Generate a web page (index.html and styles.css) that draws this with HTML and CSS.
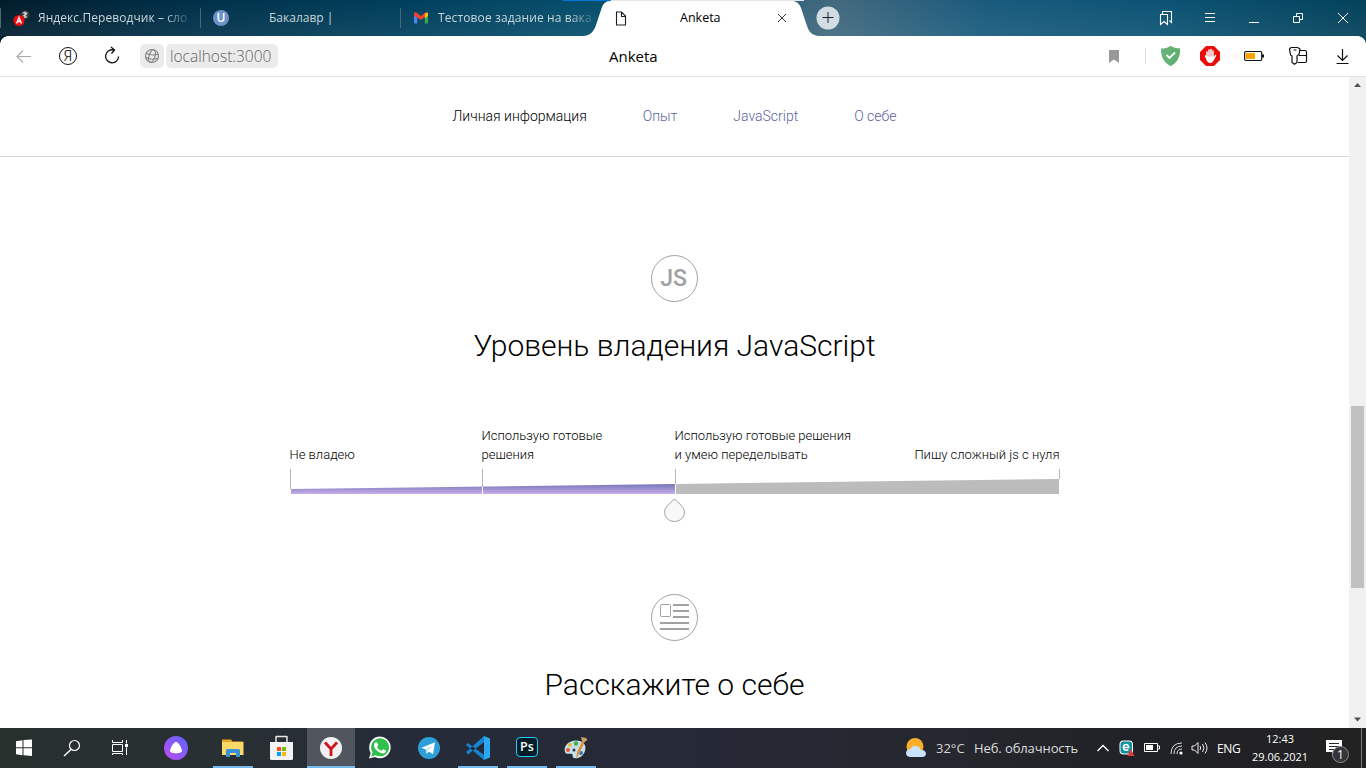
FILE: index.html
```html
<!DOCTYPE html>
<html lang="ru">
<head>
<meta charset="utf-8">
<title>Anketa</title>
<link rel="stylesheet" href="styles.css">
</head>
<body>
<header class="tabs">
  <div class="tab">
    <svg class="fav" width="18" height="18" viewBox="0 0 18 18"><circle cx="12" cy="6" r="4.500" fill="#3c3c3c"/><path d="M9.500 4h5M12 2.500v6M10 7l4-2M14 8h-3" stroke="#eee" fill="none"/><circle cx="6" cy="11.500" r="5.500" fill="#f00c0c"/><path d="M3.500 14.500 6 8.500 8.500 14.500M4.500 12.500h3" stroke="#fff" stroke-width="1.300" fill="none"/></svg>
    <span class="tab-text t1">Яндекс.Переводчик – сло</span>
  </div>
  <div class="tab">
    <span class="u-badge">U</span>
    <span class="tab-text t2">Бакалавр |</span>
  </div>
  <div class="tab tab-mail">
    <svg class="fav" width="14" height="12" viewBox="0 0 14 12"><path d="M0 2v8.500c0 .6.400 1 1 1h2.200V5z" fill="#4285f4"/><path d="M14 2v8.500c0 .6-.4 1-1 1h-2.200V5z" fill="#34a853"/><path d="M0 4V1.500C0 0 1.500-.2 2.500.6L7 4 11.500.6C12.500-.2 14 0 14 1.500L10.800 5 7 8 3.200 5.800z" fill="#ea4335"/><path d="M10.800 1.200 14 .8v3.200l-3.200 2.400z" fill="#fbbc04"/></svg>
    <span class="tab-text t3">Тестовое задание на вака</span>
  </div>
  <div class="tab-active">
    <svg class="shape" width="234" height="36" viewBox="0 0 234 36"><path d="M0 36C7 35 10 31 12 25L18 7C20 2 23 1 27 1H208C212 1 215 3 217 8L223 26C225 32 228 35 234 36z" fill="#fff"/></svg>
    <svg class="page-ico" width="12" height="15" viewBox="0 0 12 15"><path d="M1.500 1h5L10.500 5V14h-9zM6.500 1v4.500h4" fill="none" stroke="#16202b" stroke-width="1.100"/></svg>
    <span class="active-name">Anketa</span>
    <svg class="close" width="10" height="10" viewBox="0 0 10 10"><path d="M1 1l8 8M9 1 1 9" stroke="#333e49" stroke-width="1"/></svg>
  </div>
  <svg class="plus" width="24" height="24" viewBox="0 0 24 24"><circle cx="12" cy="12" r="11.500" fill="#d3dce2"/><path d="M6.500 11.500h11M12 6v11" stroke="#17242e"/></svg>
  <div class="win">
    <svg width="44" height="36" viewBox="0 0 44 36"><path d="M16.500 14.500h7v10l-3.500-3-3.500 3zM18.500 14v-2.500h9v11l-2-2" fill="none" stroke="#fff" stroke-width="1.100"/></svg>
    <svg width="44" height="36" viewBox="0 0 44 36"><path d="M17 13.500h10M17 17.500h10M17 21.500h10" stroke="#fff"/></svg>
    <svg width="44" height="36" viewBox="0 0 44 36"><path d="M17 22.500h10" stroke="#fff"/></svg>
    <svg width="44" height="36" viewBox="0 0 44 36"><path d="M17.500 16.500h6v6h-6zM20.500 16v-2.500h6v6H24" fill="none" stroke="#fff"/></svg>
    <svg width="46" height="36" viewBox="0 0 46 36"><path d="m18 13 10 10M28 13 18 23" stroke="#fff"/></svg>
  </div>
  <i class="strip"><i></i></i>
</header>

<div class="toolbar">
  <svg width="44" height="40" viewBox="0 0 44 40"><path d="M29 20.500H15.500M21 14.500l-6 6 6 6" fill="none" stroke="#a9a9a9" stroke-width="1.100"/></svg>
  <div class="ya"><span>Я</span></div>
  <svg width="44" height="40" viewBox="0 0 44 40"><path d="M28.600 20.500a6.500 6.500 0 1 1-4.800-6.500M21 11l3.500 3-3 3.500" fill="none" stroke="#111" stroke-width="1.300"/></svg>
  <span class="globe"><svg width="24" height="24" viewBox="0 0 24 24"><g fill="none" stroke="#858585" stroke-width="1.200"><circle cx="12" cy="12" r="6.500"/><ellipse cx="12" cy="12" rx="3" ry="6.500" transform="rotate(15 12 12)"/><path d="M6 9.300q6 3 12.300.7M5.800 13.500q6 3 11.800.8"/></g></svg></span>
  <span class="url">localhost:3000</span>
  <span class="doc">Anketa</span>
  <div class="tools">
    <svg width="44" height="40" viewBox="0 0 44 40"><path d="M17 14h10v13l-5-3.500-5 3.500z" fill="#999"/></svg>
    <i class="sep"></i>
    <svg width="36" height="40" viewBox="0 0 36 40"><path d="M18.500 10c3 2 6 2.500 9.500 2.500 0 8-2 13.500-9.500 17.500C11 26 9 20.500 9 12.500c3.500 0 6.500-.5 9.500-2.500z" fill="#67b279"/><path d="M18.500 10c3 2 6 2.500 9.500 2.500 0 8-2 13.500-9.500 17.500z" fill="#5fb070"/><path d="m14.500 19 3 3 5.500-5.500" fill="none" stroke="#fff" stroke-width="1.800"/></svg>
    <svg width="44" height="40" viewBox="0 0 44 40"><path d="M18 10h8l6 6v8l-6 6h-8l-6-6v-8z" fill="#e90c0c"/><path d="M19 16v6M21 14v8M23 13.500v8M25 15v8M27.500 19.500l-2 4M17.500 20l1.500 3" stroke="#fff" stroke-width="1.500" stroke-linecap="round"/><path d="M18 20.500h8.300q0 6.500-4.200 6.500T18 20.500z" fill="#fff"/></svg>
    <svg width="44" height="40" viewBox="0 0 44 40"><rect x="12.700" y="15.500" width="17" height="9" rx="1.200" fill="#fff" stroke="#111" stroke-width="1.200"/><path d="M14 17h9v6h-9z" fill="#ffa300"/><path d="M30 18.500h2v3h-2z" fill="#111"/></svg>
    <svg width="44" height="40" viewBox="0 0 44 40"><g fill="#fff" stroke="#111" stroke-width="1.200"><path d="M21 14.500h8q1.500 0 1.500 1.500v9q0 1.500-1.500 1.500h-7M23 19.500h7.500"/><path d="M15 11.500h6.500l2.500 1.500-1 5.500-2 1.500v6.500l-2.500 1.700-2.500-1.700V20l-1.500-1-1-6zM17.500 14h3"/></g></svg>
    <svg width="44" height="40" viewBox="0 0 44 40"><path d="M22.500 13v11.500m-5-5 5 5 5-5M16.500 27.500h12" fill="none" stroke="#111" stroke-width="1.200"/></svg>
  </div>
</div>

<div class="view">
  <main class="page">
    <nav class="menu"><a class="on">Личная информация</a><a>Опыт</a><a>JavaScript</a><a>О себе</a></nav>
    <section class="level">
      <div class="round">JS</div>
      <h2>Уровень владения JavaScript</h2>
      <div class="scale">
        <div class="labels"><span>Не владею</span><span>Использую готовые<br>решения</span><span>Использую готовые решения<br>и умею переделывать</span><span class="end">Пишу сложный js с нуля</span></div>
        <svg class="bar" width="770" height="54" viewBox="0 0 770 54">
          <defs><linearGradient id="fill" x1="0" y1="15" x2="0" y2="25" gradientUnits="userSpaceOnUse"><stop offset="0" stop-color="#7574b8"/><stop offset="1" stop-color="#c7afea"/></linearGradient></defs>
          <path d="M385 15 769 10V25H385z" fill="#bcbcbc"/>
          <path d="M1 20 385 15V25H1z" fill="url(#fill)"/>
          <path d="M192.500 18v7M385.500 15v10" stroke="#fff"/>
          <path d="M.5 0v20M192.500 0v18M385.500 0v15M769.500 0v10" stroke="#b7b7b7"/>
          <path d="M384.500 30.500c1 0 1.400.6 2 1.300l5.500 5.400c5.300 5.500 1.500 15.300-7.500 15.300s-12.800-9.800-7.500-15.300l5.500-5.400c.6-.7 1-1.300 2-1.300z" fill="#f9f9f9" stroke="#a1a1a1"/>
        </svg>
      </div>
    </section>
    <section class="about">
      <svg class="card-ico" width="47" height="47" viewBox="0 0 47 47"><circle cx="23.500" cy="23.500" r="23" fill="none" stroke="#a1a1a1"/><rect x="9.500" y="10.500" width="10" height="12" rx="1" fill="none" stroke="#a1a1a1"/><path d="M22 11h16M22 17h16M22 23h16M9 29h29M9 35h29" stroke="#a1a1a1" stroke-width="2"/></svg>
      <h2>Расскажите о себе</h2>
    </section>
  </main>
  <div class="scroll">
    <svg width="17" height="17" viewBox="0 0 17 17"><path d="M5 10 8.500 6 12 10z" fill="#505050"/></svg>
    <i class="thumb"></i>
    <svg class="down" width="17" height="17" viewBox="0 0 17 17"><path d="M5 6.500 8.500 10.500 12 6.500z" fill="#505050"/></svg>
  </div>
</div>

<footer class="taskbar">
  <div class="sys">
    <svg width="48" height="40" viewBox="0 0 48 40"><path d="m16 13.200 6.500-.9v7H16zM23.500 12.100 32 11.500v7.800h-8.500zM16 20.300h6.500v6.900l-6.500-.9zM23.500 20.300H32V28l-8.500-.7z" fill="#fff"/></svg>
    <svg width="48" height="40" viewBox="0 0 48 40"><circle cx="26.500" cy="17.500" r="5" fill="none" stroke="#fff" stroke-width="1.200"/><path d="m23 21.500-7 6.500" stroke="#fff" stroke-width="1.400"/></svg>
    <svg width="48" height="40" viewBox="0 0 48 40"><path d="M16.500 12v2.500h10V12M16.500 16.500h10v7h-10zM16.500 27v-1.500h10V27M30.500 12v3.500M30.500 19.500V27" fill="none" stroke="#fff"/><path d="M29 16h3v3h-3z" fill="#fff"/></svg>
    <svg class="alice" width="48" height="40" viewBox="0 0 48 40"><defs><linearGradient id="al" x1="1" y1="0" x2="0" y2="1"><stop stop-color="#5965ff"/><stop offset="1" stop-color="#c14df4"/></linearGradient></defs><circle cx="24" cy="20" r="12" fill="url(#al)"/><path d="M24 14c2.500 0 6 6.500 6 9 0 3-12 3-12 0 0-2.500 3.500-9 6-9z" fill="#fff"/></svg>
  </div>
  <div class="apps">
    <svg class="open" width="48" height="40" viewBox="0 0 48 40"><path d="M13 11.500h9l1.500 2H34V27H13z" fill="#e9a720"/><path d="M13 14h21.500v13H13z" fill="#ffd968"/><path d="M17 29v-6.500q0-1.500 1.500-1.500h11q1.500 0 1.500 1.500V29h-4v-4h-6v4z" fill="#3a92d8"/></svg>
    <svg width="48" height="40" viewBox="0 0 48 40"><path d="M18 16V9q0-.5.500-.5h10q.5 0 .5.500v7" fill="none" stroke="#e8e8e8" stroke-width="1.500"/><path d="M12 14h23v16.500q0 1.500-1.500 1.500h-20q-1.500 0-1.500-1.500z" fill="#f3f3f3"/><path d="M19 19h4v4h-4z" fill="#f25022"/><path d="M24 19h4v4h-4z" fill="#7fba00"/><path d="M19 24h4v4h-4z" fill="#00a4ef"/><path d="M24 24h4v4h-4z" fill="#ffb900"/></svg>
    <svg class="open current" width="48" height="40" viewBox="0 0 48 40"><circle cx="24" cy="20" r="11" fill="#f1f1f1"/><path d="m18 14.500 6 6.500 6-6.500M24 20.500V28" fill="none" stroke="#d0111b" stroke-width="2.800"/></svg>
    <svg width="48" height="40" viewBox="0 0 48 40"><path d="M13 30.500l1.700-5.500A10.800 10.800 0 1 1 19 29z" fill="#fff"/><path d="m15 28.700 1.500-4.500a9 9 0 1 1 3.200 3z" fill="#30c04b"/><path d="M19.500 14.500c2-1 2 1 2.700 2.500.3.800-1.200 1.500-1 2.200 1 1.800 2.500 3 4.300 3.500.8 0 1.200-1.700 2-1.400l2.500 1.400c0 2.500-2.500 3-4 2.600-4.500-1.300-8.300-5-8-8.300 0-1 .7-2 1.500-2.500z" fill="#fff"/></svg>
    <svg width="48" height="40" viewBox="0 0 48 40"><circle cx="24" cy="20" r="11" fill="#2f9fda"/><path d="m16.500 19.700 13.500-5.500-2 12-4-2.800-2.500 2.300-.5-4z" fill="#fff"/><path d="m21 21.700 7-5-5.500 6-1 3z" fill="#b9d9eb"/></svg>
    <svg class="open" width="48" height="40" viewBox="0 0 48 40"><path d="m12 17 2-2 16 12v5zM12 24l2 2.500L30 14V8z" fill="#1684cf"/><path d="m30 8 6 2.500v19L30 32z" fill="#2ba7f1"/></svg>
    <div class="open ps"><span>Ps</span></div>
    <svg class="open" width="48" height="40" viewBox="0 0 48 40"><path d="M13 24c-2-6 4-11.500 11-11.500S35 17 33 23s-7 8-11 7c-3-1 0-3-2-4s-6 1-7-2z" fill="#c5dfeb"/><circle cx="16" cy="22" r="2" fill="#e95542"/><circle cx="18" cy="17" r="2" fill="#efb72e"/><circle cx="24" cy="15.500" r="2.200" fill="#45ad46"/><circle cx="22" cy="22" r="1.500" fill="#27364e"/><circle cx="29" cy="25" r="2" fill="#3a78b9"/><path d="m24 31 1.500-8L31 12l2 1-6 13z" fill="#e08b2d"/><path d="m30 13-1-4 5 1 1.500 2-3 2z" fill="#c6a06a"/></svg>
  </div>
  <div class="tray">
    <svg class="sun" width="22" height="22" viewBox="0 0 22 22"><circle cx="10" cy="9.500" r="8.500" fill="#fbae27"/><path d="M5 20q-4-.5-4-4t4.500-4q2-4 6-3t4 4q5-.5 5.500 3.500-.3 3.500-4 3.500z" fill="#c9e4fa"/></svg>
    <span class="deg">32°C</span><span class="cloudy">Неб. облачность</span>
    <svg class="chev" width="14" height="9" viewBox="0 0 14 9"><path d="m1.500 7 5.500-5.500L12.500 7" fill="none" stroke="#fff" stroke-width="1.300"/></svg>
    <svg class="eset" width="16" height="17" viewBox="0 0 16 17"><rect x=".5" y=".5" width="13.500" height="14" rx="4" fill="#fff"/><rect x="1.500" y="1.500" width="11.500" height="12" rx="3" fill="#10909a"/><path d="M4.500 7.500h5.200q0-3-2.700-3t-2.600 3q0 3.300 5 2.500" fill="none" stroke="#fff" stroke-width="1.600"/><path d="m11.500 9 4 7h-7z" fill="#e03a35"/></svg>
    <svg class="batt" width="16" height="10" viewBox="0 0 16 10"><path d="M.5.500h13v8H.5zM14 3h1.500v3H14" fill="none" stroke="#fff"/><path d="M2 2h7v5H2z" fill="#fff"/></svg>
    <svg class="wifi" width="13" height="13" viewBox="0 0 13 13"><g fill="none" stroke="#ddd"><path d="M1 12Q1 1 12 1M4 12q0-8 8-8M7 12q0-5 5-5"/></g><circle cx="11" cy="11" r="1.600" fill="#fff"/></svg>
    <svg class="vol" width="17" height="14" viewBox="0 0 17 14"><path d="M1 5h2.500L7 1.500v11L3.500 9H1zM9 5q1.500 2 0 4M11.500 3q3 4 0 8M14 1.500q4 5.500 0 11" fill="none" stroke="#eee"/></svg>
    <span class="lang">ENG</span>
    <div class="clock"><span>12:43</span><span>29.06.2021</span></div>
    <div class="note"><svg width="17" height="16" viewBox="0 0 17 16"><path d="M0 0h16v12H9l-3 3v-3H0z" fill="#fff"/><path d="M3 3.500h10M3 6.500h10M3 9.500h7" stroke="#27282d"/></svg><b>1</b></div>
  </div>
</footer>
</body>
</html>
```
FILE: styles.css
```css
* { box-sizing: border-box; }
body { margin: 0; width: 1366px; height: 768px; overflow: hidden; display: flex; flex-direction: column; background: #fff; color: #000; font-family: "Open Sans", "Noto Sans", sans-serif; }
svg { display: block; flex: none; }
i { display: block; }

.tabs { position: relative; flex: none; height: 36px; display: flex; align-items: center; background: linear-gradient(180deg, #0000, #fff1), linear-gradient(100deg, #001c2b 0, #003049 14%, #00405d 30%, #07506e 45%, #42697e 61%, #195b7d 72%, #0c5374 85%, #03415a 100%); }
.tab { width: 200px; height: 20px; display: flex; align-items: center; border-left: 1px solid #4b6876; padding-left: 12px; flex: none; }
.tab-mail { width: 184px; padding-left: 13px; }
.tab-text { white-space: nowrap; font-size: 12px; line-height: 18px; color: #c9d5da; }
.t1, .t3 { margin-left: 7px; letter-spacing: 0.07px; -webkit-mask-image: linear-gradient(90deg, #000 85%, #0003); mask-image: linear-gradient(90deg, #000 85%, #0003); }
.t3 { margin-left: 10px; letter-spacing: 0.12px; }
.t2 { margin-left: 40px; }
.u-badge { width: 16px; height: 16px; border-radius: 50%; background: #6d92c8; color: #fff; font-size: 12px; font-weight: 600; line-height: 15px; text-align: center; }
.tab-active { position: relative; width: 234px; height: 36px; display: flex; align-items: center; flex: none; }
.shape { position: absolute; left: 0; top: 0; }
.page-ico { position: relative; margin-left: 31px; }
.active-name { position: relative; width: 42px; margin-left: 53px; font-size: 12.500px; line-height: 18px; }
.close { position: relative; margin-left: 55px; }
.plus { margin-left: -2px; margin-top: -1px; }
.win { margin-left: auto; display: flex; }
.strip { position: absolute; left: 563px; top: 0; width: 241px; height: 1px; background: #e5e5e5; }
.strip i { width: 48px; height: 1px; background: #0078d7; }

.toolbar { position: relative; flex: none; height: 41px; display: flex; align-items: flex-start; padding-left: 2px; background: #fff; border-bottom: 1px solid #e3e3e3; }
.toolbar::before { content: ""; position: absolute; left: 0; top: 0; width: 1366px; height: 8px; background: radial-gradient(circle at 8px 8px, transparent 7.500px, #002235 8px) 0 0 / 8px 8px no-repeat, radial-gradient(circle at 0 8px, transparent 7.500px, #07475f 8px) 100% 0 / 8px 8px no-repeat; }
.ya { width: 44px; height: 40px; display: grid; place-items: center; }
.ya span { width: 18px; height: 18px; border: 1.500px solid #111; border-radius: 50%; font: 300 14px/15px "Open Sans", sans-serif; text-align: center; -webkit-text-stroke: 0.2px #111; }
.globe { width: 24px; height: 24px; margin: 8px 0 0 6px; border-radius: 5px; background: #ebebeb; }
.url { width: 112px; height: 24px; margin: 8px 0 0 2px; padding-left: 4px; border-radius: 5px; background: #ebebeb; color: #666; font-size: 15.500px; line-height: 24px; font-weight: 300; white-space: nowrap; }
.doc { width: 60px; margin-left: 331px; font-size: 15px; line-height: 41px; }
.tools { margin-left: auto; margin-right: 2px; display: flex; align-items: center; }
.sep { width: 1px; height: 16px; margin: 0 6px 0 9px; background: #ddd; }

.view { flex: none; height: 651px; display: flex; overflow: hidden; }
.page { width: 1349px; font-family: Roboto, sans-serif; font-weight: 300; }
.menu { height: 80px; display: flex; justify-content: center; gap: 56px; border-bottom: 1px solid #d9d9d9; font-size: 14px; line-height: 78px; }
.menu a { color: #5b629c; }
.menu .on { color: #000; }
.level { display: flex; flex-direction: column; align-items: center; padding-top: 98px; }
.round { width: 47px; height: 47px; border: 1px solid #a1a1a1; border-radius: 50%; color: #a1a1a1; font-size: 23px; font-weight: 500; line-height: 46px; text-align: center; padding-right: 2px; }
h2 { margin: 24px 0 0; font-size: 30px; line-height: 40px; font-weight: 300; white-space: nowrap; }
.scale { width: 770px; margin: 60px 0 0 1px; }
.labels { width: 770px; height: 38px; margin-left: -0.500px; display: grid; grid-template-columns: 192px 193px 192px 193px; align-items: end; font-size: 13px; line-height: 19px; white-space: nowrap; }
.end { text-align: right; }
.bar { margin-top: 5px; }
.about { display: flex; flex-direction: column; align-items: center; padding-top: 71px; }
.scroll { width: 17px; display: flex; flex-direction: column; background: #f1f1f1; }
.thumb { width: 13px; height: 182px; margin: 312px 0 0 2px; background: #c1c1c1; }
.down { margin-top: auto; }

.taskbar { flex: none; height: 40px; display: flex; background: linear-gradient(90deg, #28302e 0, #293033 16%, #252b38 30%, #262936 50%, #25272e 70%, #202126 85%, #222 100%); color: #fff; }
.sys { display: flex; }
.alice { margin-left: 8px; }
.apps { display: flex; gap: 1px; margin-left: 9px; }
.open { background: linear-gradient(#76b9ed, #76b9ed) 4px 38px / 40px 2px no-repeat; }
.current { background: linear-gradient(#76b9ed, #76b9ed) 0 38px / 48px 2px no-repeat, #51565e; }
.ps { width: 48px; height: 40px; padding: 9px 0 0 13px; }
.ps span { display: block; width: 22px; height: 20px; border: 1.500px solid #26c9ff; border-radius: 4px; background: #001d26; font-size: 12.500px; font-weight: 600; line-height: 17px; text-align: center; }
.tray { margin-left: auto; display: flex; align-items: center; white-space: nowrap; }
.sun { margin-right: -1px; }
.deg { width: 38px; margin-left: 10px; font-size: 13px; color: #d5d5d5; }
.cloudy { width: 105px; font-size: 13px; letter-spacing: -0.1px; color: #ddd; }
.chev { margin-left: 17px; }
.eset { margin-left: 9px; }
.batt { margin-left: 9px; }
.wifi { margin-left: 10px; }
.vol { margin-left: 8px; }
.lang { width: 26px; margin-left: 9px; margin-right: 1px; font-size: 12px; letter-spacing: -0.3px; }
.clock { width: 60px; margin-left: 6px; margin-right: 1px; display: flex; flex-direction: column; align-items: center; font-size: 11px; line-height: 18px; }
.note { position: relative; width: 36px; height: 40px; margin-left: 15px; padding-top: 12px; border-right: 1px solid #777; margin-right: 4px; }
.note b { position: absolute; left: 6px; top: 18px; width: 17px; height: 17px; border: 1px solid #8b8b8b; border-radius: 50%; background: #35363a; font-size: 12px; font-weight: 400; line-height: 15px; text-align: center; }
```
